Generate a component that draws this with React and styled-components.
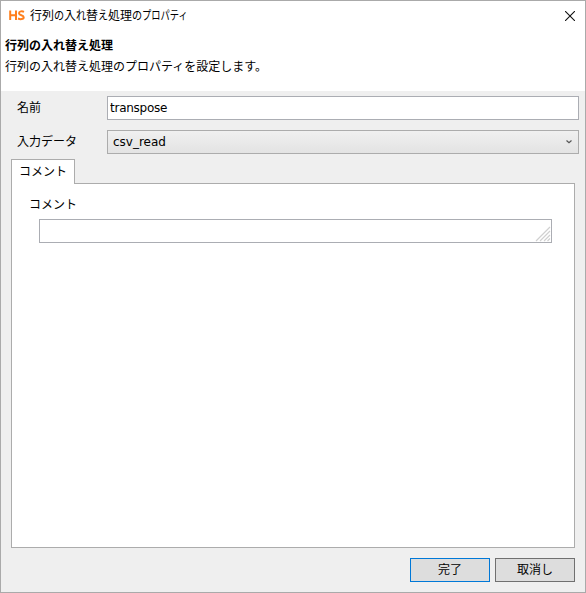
import React from 'react';
import styled, { createGlobalStyle } from 'styled-components';

const GlobalStyle = createGlobalStyle`
  * {
    box-sizing: border-box;
  }
  body {
    margin: 0;
    font-family: "DejaVu Sans", "Noto Sans CJK JP", sans-serif;
    font-size: 12px;
    line-height: 16px;
    color: #000;
  }
`;

const Dialog = styled.div`
  display: flex;
  flex-direction: column;
  width: 586px;
  height: 593px;
  border: 1px solid #aaa;
  background: #efefef;
`;

const Header = styled.header`
  height: 90px;
  background: #fff;
`;

const TitleBar = styled.div`
  display: flex;
  align-items: center;
  height: 30px;
  padding: 0 10px 1px 7px;
`;

const Logo = styled.svg`
  width: 17px;
  height: 11px;
  margin-right: 5px;
`;

const Title = styled.div`
  flex: 1;
  padding-top: 1px;
  white-space: nowrap;
`;

// kana are narrower than kanji in the caption font
const Kana = styled.span`
  display: inline-block;
  width: ${props => props.$width || 10}px;
  transform: scaleX(${props => props.$scale || 0.84});
  transform-origin: left;
`;

const Heading = styled.h1`
  margin: 7px 0 0 4px;
  font-size: 12px;
  font-weight: bold;
  line-height: 16px;
`;

const Description = styled.p`
  margin: 5px 0 0 4px;
`;

const Form = styled.div`
  display: flex;
  flex-direction: column;
  gap: 10px;
  padding: 5px 6px 0 16px;
`;

const Row = styled.label`
  display: flex;
  height: 24px;
  line-height: 22px;
`;

const Label = styled.span`
  width: 90px;
  padding-top: 1px;
`;

const TextInput = styled.input`
  flex: 1;
  min-width: 0;
  padding: 0 2px;
  border: 1px solid #abadb3;
  outline: none;
  background: #fff;
  font: inherit;
  letter-spacing: -0.25px;
`;

const Combo = styled.div`
  flex: 1;
  display: flex;
  align-items: center;
  justify-content: space-between;
  padding: 0 6px 0 5px;
  border: 1px solid #acacac;
  background: linear-gradient(#f0f0f0, #e3e3e3);
`;

const Tabs = styled.div`
  flex: 1;
  display: flex;
  flex-direction: column;
  padding: 5px 10px 0;
`;

const Tab = styled.div`
  width: 64px;
  height: 25px;
  margin-bottom: -1px;
  padding: 4px 0 0 7px;
  border: 1px solid #acacac;
  border-bottom: none;
  background: #fff;
  z-index: 1;
`;

const Panel = styled.div`
  flex: 1;
  padding: 13px 22px 0 17px;
  border: 1px solid #acacac;
  background: #fff;
`;

const CommentBox = styled.div`
  display: flex;
  align-items: flex-end;
  justify-content: flex-end;
  height: 24px;
  margin: 6px 0 0 10px;
  border: 1px solid #abadb3;
`;

const Footer = styled.footer`
  display: flex;
  justify-content: flex-end;
  gap: 5px;
  padding: 10px 10px;
`;

const Button = styled.button`
  width: 80px;
  height: 24px;
  padding: 0;
  border: 1px solid ${props => (props.$primary ? '#0078d7' : '#707070')};
  background: #ddd;
  font: inherit;
  color: #000;
`;

const App = () => {
  return (
    <Dialog>
      <GlobalStyle />
      <Header>
        <TitleBar>
          <Logo viewBox="0 0 17 11" fill="none" stroke="#ff7f1c" strokeWidth="2">
            <path d="M2.2 0.5V10M8 0.5V10M2 5.2H8M16 1.8C14.2 1 11 1 11 3.2C11 5.8 15.7 4.6 15.7 7.2C15.7 9.6 12 9.4 10 8.5" />
          </Logo>
          <Title>
            行列<Kana>の</Kana>入<Kana>れ</Kana>替<Kana>え</Kana>処理<Kana>の</Kana>
            <Kana $width={46} $scale={0.77}>プロパティ</Kana>
          </Title>
          <svg width="10" height="10" viewBox="0 0 10 10" stroke="#111" strokeWidth="1.1">
            <path d="M0 0L10 10M10 0L0 10" />
          </svg>
        </TitleBar>
        <Heading>行列の入れ替え処理</Heading>
        <Description>行列の入れ替え処理のプロパティを設定します。</Description>
      </Header>

      <Form>
        <Row>
          <Label>名前</Label>
          <TextInput defaultValue="transpose" />
        </Row>
        <Row>
          <Label>入力データ</Label>
          <Combo>
            <span>csv_read</span>
            <svg width="6" height="4" viewBox="0 0 6 4" fill="none" stroke="#555" strokeWidth="1.2">
              <path d="M0.5 0.5L3 2.8L5.5 0.5" />
            </svg>
          </Combo>
        </Row>
      </Form>

      {/* only one tab on this page */}
      <Tabs>
        <Tab>コメント</Tab>
        <Panel>
          <div>コメント</div>
          <CommentBox>
            <svg width="16" height="16" viewBox="0 0 16 16" stroke="#d0d0d0" strokeWidth="1.2">
              <path d="M1 15L15 1M5 15L15 5M9 15L15 9M12.5 15L15 12.5" />
            </svg>
          </CommentBox>
        </Panel>
      </Tabs>

      <Footer>
        <Button $primary>完了</Button>
        <Button>取消し</Button>
      </Footer>
    </Dialog>
  );
};

export default App;
